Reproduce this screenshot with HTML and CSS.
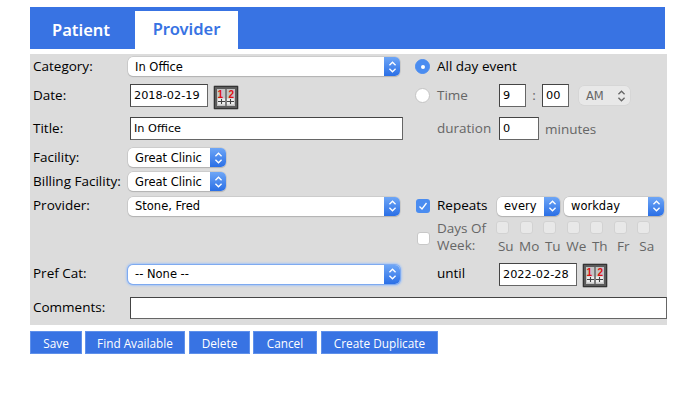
FILE: index.html
```html
<!DOCTYPE html>
<html lang="en">
<head>
  <meta charset="UTF-8" />
  <title>Add New Event</title>
  <link rel="stylesheet" href="styles.css">
</head>
<body>
  <svg class="defs" width="0" height="0" aria-hidden="true">
    <symbol id="updown" viewBox="0 0 10 16">
      <path d="M1.500 6 5 2.500 8.500 6M1.500 10 5 13.500 8.500 10" fill="none" stroke="currentColor" stroke-width="1.500"/>
    </symbol>
  </svg>

  <nav class="tabs">
    <a class="tab">Patient</a>
    <a class="tab active">Provider</a>
  </nav>

  <form class="panel">
    <div class="row row-category">
      <label class="lbl">Category:</label>
      <div class="main"><div class="select wide"><span>In Office</span><i class="caret"><svg><use href="#updown"/></svg></i></div></div>
      <div class="side">
        <span class="radio on"></span>
        <span class="side-text dark nowrap">All day event</span>
      </div>
    </div>

    <div class="row row-date">
      <label class="lbl">Date:</label>
      <div class="main inset">
        <input class="field date" type="text" value="2018-02-19">
        <svg class="cal-btn" viewBox="0 0 26 25">
          <rect x="0.500" y="0.500" width="25" height="24" rx="1.500" fill="#d8d8d8" stroke="#aaa"/>
          <rect x="1.500" y="1.500" width="23" height="22" fill="#5c5c5c" stroke="#333"/>
          <rect x="4" y="4" width="18" height="17" fill="#c4c4c4"/>
          <rect x="5" y="13.500" width="7" height="6" fill="#eee"/>
          <rect x="14" y="13.500" width="7" height="6" fill="#eee"/>
          <text x="4.500" y="12.500" class="cal-num">1</text>
          <text x="15.500" y="12.500" class="cal-num">2</text>
          <path d="M13 4v17M5 16.500h7M14 16.500h7M8.500 14v5M17.500 14v5" stroke="#444" stroke-width="1.100" fill="none"/>
        </svg>
      </div>
      <div class="side">
        <span class="radio"></span>
        <span class="side-text">Time</span>
        <input class="field hour" type="text" value="9">
        <span class="colon">:</span>
        <input class="field minute" type="text" value="00">
        <div class="select ampm"><span>AM</span><svg class="plain-caret"><use href="#updown"/></svg></div>
      </div>
    </div>

    <div class="row row-title">
      <label class="lbl">Title:</label>
      <div class="main inset"><input class="field title" type="text" value="In Office"></div>
      <div class="side">
        <span class="radio-gap"></span>
        <span class="side-text">duration</span>
        <input class="field dur" type="text" value="0">
        <span class="minutes">minutes</span>
      </div>
    </div>

    <div class="row row-facility">
      <label class="lbl">Facility:</label>
      <div class="main"><div class="select clinic"><span>Great Clinic</span><i class="caret"><svg><use href="#updown"/></svg></i></div></div>
    </div>

    <div class="row row-billing">
      <label class="lbl">Billing Facility:</label>
      <div class="main"><div class="select clinic"><span>Great Clinic</span><i class="caret"><svg><use href="#updown"/></svg></i></div></div>
    </div>

    <div class="row row-provider">
      <label class="lbl">Provider:</label>
      <div class="main"><div class="select wide"><span>Stone, Fred</span><i class="caret"><svg><use href="#updown"/></svg></i></div></div>
      <div class="side">
        <span class="check on"><svg viewBox="0 0 14 14"><path d="M3.500 7.500 6 10l4.500-6" fill="none" stroke="#fff" stroke-width="1.300"/></svg></span>
        <span class="side-text dark">Repeats</span>
        <div class="select every"><span>every</span><i class="caret"><svg><use href="#updown"/></svg></i></div>
        <div class="select workday"><span>workday</span><i class="caret"><svg><use href="#updown"/></svg></i></div>
      </div>
    </div>

    <div class="row row-days">
      <div class="lbl"></div>
      <div class="main"></div>
      <div class="side">
        <span class="check off"></span>
        <span class="side-text days-label">Days Of Week:</span>
        <div class="days">
          <div class="day"><span class="daybox"></span>Su</div>
          <div class="day"><span class="daybox"></span>Mo</div>
          <div class="day"><span class="daybox"></span>Tu</div>
          <div class="day"><span class="daybox"></span>We</div>
          <div class="day"><span class="daybox"></span>Th</div>
          <div class="day"><span class="daybox"></span>Fr</div>
          <div class="day"><span class="daybox"></span>Sa</div>
        </div>
      </div>
    </div>

    <div class="row row-pref">
      <label class="lbl">Pref Cat:</label>
      <div class="main"><div class="select wide focus"><span>-- None --</span><i class="caret"><svg><use href="#updown"/></svg></i></div></div>
      <div class="side">
        <span class="radio-gap"></span>
        <span class="side-text dark">until</span>
        <input class="field date until" type="text" value="2022-02-28">
        <svg class="cal-btn" viewBox="0 0 26 25">
          <rect x="0.500" y="0.500" width="25" height="24" rx="1.500" fill="#d8d8d8" stroke="#aaa"/>
          <rect x="1.500" y="1.500" width="23" height="22" fill="#5c5c5c" stroke="#333"/>
          <rect x="4" y="4" width="18" height="17" fill="#c4c4c4"/>
          <rect x="5" y="13.500" width="7" height="6" fill="#eee"/>
          <rect x="14" y="13.500" width="7" height="6" fill="#eee"/>
          <text x="4.500" y="12.500" class="cal-num">1</text>
          <text x="15.500" y="12.500" class="cal-num">2</text>
          <path d="M13 4v17M5 16.500h7M14 16.500h7M8.500 14v5M17.500 14v5" stroke="#444" stroke-width="1.100" fill="none"/>
        </svg>
      </div>
    </div>

    <div class="row row-comments">
      <label class="lbl">Comments:</label>
      <div class="main inset grow"><input class="field comments" type="text"></div>
    </div>
  </form>

  <div class="actions">
    <button class="btn btn-save" type="button">Save</button>
    <button class="btn btn-find" type="button">Find Available</button>
    <button class="btn btn-delete" type="button">Delete</button>
    <button class="btn btn-cancel" type="button">Cancel</button>
    <button class="btn btn-dup" type="button">Create Duplicate</button>
  </div>
</body>
</html>
```

FILE: styles.css
```css
* {
  box-sizing: border-box;
}
body {
  margin: 0;
  padding: 7px 23px 0 30px;
  background: white;
  color: #000;
  font-family: 'Open Sans', 'Noto Sans', sans-serif;
  font-size: 13.500px;
}
.defs {
  position: absolute;
}
.cal-num {
  font-family: 'Liberation Sans', sans-serif;
  font-size: 10px;
  font-weight: 700;
  fill: #e01010;
}

/* tabs */
.tabs {
  display: flex;
  align-items: flex-end;
  width: 635px;
  height: 42px;
  padding-left: 22px;
  background: #3873e3;
}
.tab {
  font-family: 'Noto Sans', sans-serif;
  font-size: 16.500px;
  font-weight: 600;
  color: white;
  line-height: 38px;
  padding-bottom: 2px;
  height: 38px;
  width: 83px;
}
.tab.active {
  width: 103px;
  line-height: 36px;
  text-align: center;
  background: white;
  color: #3873e3;
}

/* form panel */
.panel {
  margin-top: 5px;
  width: 637px;
  height: 271px;
  background: #dcdcdc;
}
.row {
  display: flex;
  align-items: center;
}
.row-category { height: 25px; }
.row-date { height: 33px; }
.row-title { height: 33px; }
.row-facility { height: 25px; }
.row-billing { height: 23px; }
.row-provider { height: 26px; }
.row-days { height: 38px; }
.row-pref { height: 34px; }
.row-comments { height: 34px; }

.lbl {
  width: 98px;
  flex: none;
  padding: 0 0 2px 3px;
  white-space: nowrap;
}
.main {
  width: 287px;
  flex: none;
  display: flex;
  align-items: center;
}
.main.inset {
  padding-left: 2px;
}
.main.grow {
  flex: 1;
}
.side {
  display: flex;
  align-items: center;
}
.side-text {
  width: 62px;
  flex: none;
  color: #666;
  padding-bottom: 2px;
}
.side-text.dark {
  color: #000;
}
.nowrap {
  white-space: nowrap;
}

/* inputs */
.field {
  height: 23px;
  border: 1.500px solid;
  border-color: #444 #666 #666 #444;
  background: white;
  padding: 0 3px;
  font-family: 'DejaVu Sans', sans-serif;
  font-size: 11.300px;
  color: #000;
  outline: none;
}
.date { width: 78px; }
.title { width: 273px; }
.hour { width: 27px; }
.minute { width: 27px; }
.dur { width: 40px; }
.comments { width: 537px; height: 22px; }
.colon {
  width: 16px;
  text-align: center;
  color: #666;
  padding-bottom: 2px;
}
.minutes {
  margin-left: 6px;
  color: #666;
}
.cal-btn {
  width: 26px;
  height: 25px;
  margin: 3px 0 0 5px;
}

/* select look-alikes */
.select {
  display: flex;
  align-items: center;
  justify-content: space-between;
  height: 19px;
  border-radius: 5px;
  background: white;
  box-shadow: 0 0 0 0.500px #bbb, 0 1px 1px #aaa;
  font-family: 'DejaVu Sans', sans-serif;
  font-size: 11.500px;
  padding-left: 7px;
  overflow: hidden;
  white-space: nowrap;
}
.select.wide { width: 272px; }
.select.clinic { width: 98px; }
.select.every { width: 63px; margin-left: -2px; }
.select.workday { width: 100px; margin-left: 4px; }
.select.focus {
  box-shadow: 0 0 0 1px #7eaaf0, 0 0 2px 2px #a8c6f4;
}
.caret {
  width: 16px;
  height: 100%;
  flex: none;
  display: flex;
  align-items: center;
  justify-content: center;
  background: linear-gradient(#6ea6f6, #2a6fe6);
  color: white;
}
.caret svg, .plain-caret {
  width: 9px;
  height: 14px;
}
.select.ampm {
  width: 51px;
  margin-left: 10px;
  background: #e8e8e8;
  color: #666;
  box-shadow: 0 0 0 0.500px #d0d0d0;
  padding-right: 4px;
}

/* radios and checks */
.radio, .radio-gap {
  width: 15px;
  height: 15px;
  margin-right: 7px;
  flex: none;
}
.radio {
  border-radius: 50%;
  background: white;
  border: 1px solid #c4c4c4;
  position: relative;
}
.radio.on {
  background: #4a8cf0;
  border-color: #4a8cf0;
}
.radio.on::after {
  content: '';
  position: absolute;
  left: 4.500px;
  top: 4.500px;
  width: 4px;
  height: 4px;
  border-radius: 50%;
  background: white;
}
.check {
  width: 14px;
  height: 14px;
  margin-right: 7px;
  flex: none;
  border-radius: 3px;
  display: block;
}
.check svg {
  display: block;
}
.check.on {
  margin-left: 1px;
  background: #4a8cf0;
}
.check.off {
  margin-left: 2px;
  width: 13px;
  height: 13px;
  background: white;
  border: 1px solid #c8c8c8;
}
.days-label {
  width: 57px;
  line-height: 17px;
}
.days {
  display: flex;
}
.day {
  width: 23.500px;
  text-align: center;
  color: #666;
  line-height: 18px;
}
.daybox {
  display: block;
  width: 13px;
  height: 13px;
  margin: 0 0 3px 2px;
  border-radius: 3px;
  background: #e8e8e8;
  border: 1px solid #d2d2d2;
}

/* bottom buttons */
.actions {
  display: flex;
  gap: 3px;
  margin-top: 6px;
}
.btn {
  height: 23px;
  padding: 0;
  border: 1px solid #5f90ea;
  background: #3873e3;
  color: white;
  font-family: 'Open Sans', sans-serif;
  font-size: 11.800px;
}
.btn-save { width: 52px; }
.btn-find { width: 100px; }
.btn-delete { width: 61px; margin-left: 1px; }
.btn-cancel { width: 64px; }
.btn-dup { width: 117px; margin-left: 1px; }
```
